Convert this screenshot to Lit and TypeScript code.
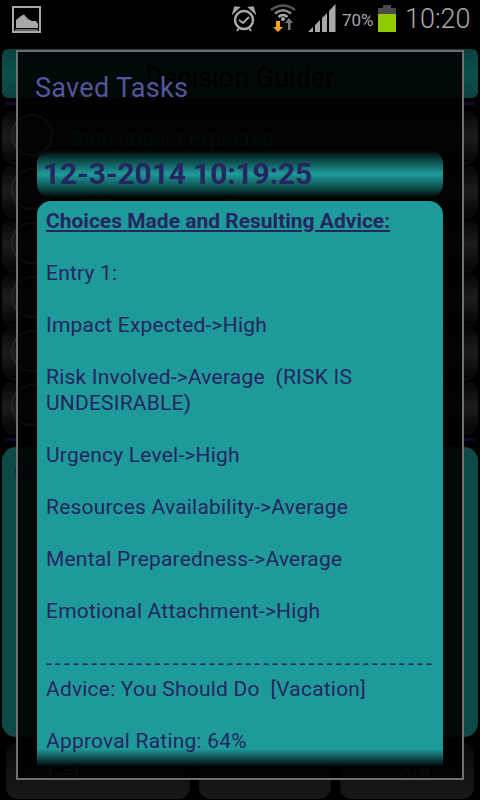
import { LitElement, html, css } from "lit";
import { customElement } from "lit/decorators.js";

const rows = ["Rate impact expected", "Rate risk involved", "Rate urgency level", "Rate resources", "Rate preparedness", "Rate attachment"];
const before = [
  "Entry 1:", "", "Impact Expected->High", "", "Risk Involved->Average  (RISK IS UNDESIRABLE)", "",
  "Urgency Level->High", "", "Resources Availability->Average", "", "Mental Preparedness->Average", "",
  "Emotional Attachment->High", "",
];
const after = ["Advice: You Should Do  [Vacation]", "", "Approval Rating: 64%", "", "Entry 2:"];

@customElement("app-root")
export class AppRoot extends LitElement {
  static styles = css`
    :host { display: block; position: relative; width: 480px; height: 800px; overflow: hidden; background: #000; font-family: Roboto, "Liberation Sans", sans-serif; }
    .status { height: 40px; display: flex; align-items: flex-start; color: #a8a8a8; position: relative; }
    .status svg { display: block; flex: none; }
    .pic { margin: 6px 0 0 12px; }
    .alarm { margin: 6px 0 0 191px; }
    .wifi { margin: 4px 0 0 14px; }
    .signal { margin: 4px 0 0 12px; }
    .pct { font-size: 17px; line-height: 20px; margin: 10px 0 0 6px; width: 33px; white-space: nowrap; }
    .batt { margin: 5px 0 0 3px; }
    .time { font-size: 27px; font-weight: 300; line-height: 36px; margin: 1px 0 0 9px; white-space: nowrap; }

    .app { display: flex; flex-direction: column; height: 760px; padding: 9px 2px 0; box-sizing: border-box; }
    .title { height: 49px; flex: none; border-radius: 6px; display: flex; align-items: center; justify-content: center; padding-top: 8px; box-sizing: border-box; font-size: 27px; color: #000;
      background: linear-gradient(180deg, #0a423f 0%, #0b4f4b 50%, #0a423f 100%); }
    .rule { height: 3px; background: #0c0c28; margin: 4px 3px 0; flex: none; }
    .rowlist { display: flex; flex-direction: column; margin-top: 5px; }
    .row { height: 54px; box-sizing: border-box; display: flex; align-items: flex-start; gap: 18px; color: #104c4c; font-size: 21px; line-height: 26px; border-bottom: 1px solid #111;
      background: linear-gradient(180deg, #040404, #1c1c1c 50%, #040404); border-radius: 12px; padding: 4px 0 0 9px; }
    .row span:last-child { margin-top: 12px; }
    .knob { width: 42px; height: 42px; border: 2px solid; border-color: #5a5a5a #5a5a5a #5a5a5a #242424; border-radius: 50%; flex: none; box-sizing: border-box; }
    .panel { flex: none; margin-top: 6px; height: 290px; border-radius: 14px; background: #0b4a46; color: #12204a; padding: 12px 12px; box-sizing: border-box; font-size: 21px; }
    .btns { display: flex; gap: 9px; margin: 6px 4px 0; flex: none; }
    .btn { height: 56px; border-radius: 12px; background: linear-gradient(180deg, #090909, #181818); color: #484848; font-size: 21px; box-sizing: border-box; padding: 18px 44px 0 42px; overflow: hidden; }
    .b1 { width: 184px; } .b2 { width: 132px; } .b3 { flex: 1; text-align: right; }

    .dialog { position: absolute; left: 16px; top: 50px; width: 448px; height: 730px; box-sizing: border-box; border: 2px solid #6f6f6f; background: rgba(0, 0, 0, 0.88);
      display: flex; flex-direction: column; padding: 0 19px; }
    .dtitle { font-size: 27px; line-height: 32px; color: #55559a; margin: 20px 0 0 -2px; flex: none; letter-spacing: 0.3px; }
    .stamp { height: 48px; margin-top: 46px; flex: none; border-radius: 14px; font-size: 30px; font-weight: 700; color: #252560; display: flex; align-items: center; padding: 0 0 1px 6px; box-sizing: border-box; letter-spacing: -0.15px;
      background: linear-gradient(180deg, #000 0%, #0c4a48 22%, #1e9a9a 50%, #0c4a48 80%, #000 100%); flex-shrink: 0; }
    .card { position: relative; flex: 1; margin: 3px 0 11px; background: #1f9a9a; border-radius: 14px 14px 0 0; overflow: hidden; padding: 7px 9px 0; color: #252560; font-size: 21px; line-height: 26px; letter-spacing: 0.2px; }
    .card h2 { margin: 0; font: inherit; font-weight: 700; text-decoration: underline; letter-spacing: 0; }
    .card p { margin: 0; min-height: 26px; white-space: pre-wrap; }
    .card p.dash { letter-spacing: 3.25px; white-space: nowrap; }
    .fade { position: absolute; left: 0; right: 0; bottom: 0; height: 18px; background: linear-gradient(180deg, rgba(0,0,0,0), #000); }
  `;

  render() {
    return html`
      <div class="status">
        <svg class="pic" width="29" height="27" viewBox="0 0 29 27"><rect x="1" y="1" width="27" height="25" fill="none" stroke="#a8a8a8" stroke-width="2"/><path d="M4 22V14L9 10L12 8.500L16 13L20 15L24 15L26 18V22Z" fill="#a8a8a8"/><path d="M3 24H26" stroke="#666" stroke-width="2"/></svg>
        <svg class="alarm" width="24" height="26" viewBox="0 0 24 26"><circle cx="12" cy="14" r="9" fill="none" stroke="#a8a8a8" stroke-width="2.500"/><path d="M7 14L11 17L17 11" fill="none" stroke="#a8a8a8" stroke-width="2"/><path d="M1 7L7 1.500L3 1Z M23 7L17 1.500L21 1Z" fill="#a8a8a8" stroke="#a8a8a8" stroke-width="1.500"/><path d="M5 25L7 22M19 25L17 22" stroke="#a8a8a8" stroke-width="2"/></svg>
        <svg class="wifi" width="26" height="29" viewBox="0 0 26 29"><path d="M1 6Q13 -3 25 6" fill="none" stroke="#555" stroke-width="2.500"/><path d="M5 9.500Q13 3 21 9.500" fill="none" stroke="#8a8a8a" stroke-width="2.500"/><path d="M8.500 13Q13 9 17.500 13" fill="none" stroke="#a8a8a8" stroke-width="2.500"/><circle cx="13" cy="15" r="2" fill="#a8a8a8"/><path d="M10 17V23H13L8 28L3 23H6V17Z" fill="#f5a623"/><path d="M18 26V19H15L19 14L23 19H20.500V26Z" fill="#777"/></svg>
        <svg class="signal" width="28" height="28" viewBox="0 0 28 28"><path d="M0 28L5 23V28ZM7 28V21L12 16V28ZM14 28V14L19 9V28ZM21 28V7L27.500 0V28Z" fill="#a8a8a8"/></svg>
        <span class="pct">70%</span>
        <svg class="batt" width="18" height="27" viewBox="0 0 18 27"><path d="M5 0H13V3H18V9H0V3H5Z" fill="#4a4a4a"/><rect y="9" width="18" height="18" fill="#8fcb00"/></svg>
        <span class="time">10:20</span>
      </div>
      <div class="app">
        <div class="title">Decision Guider</div>
        <div class="rule"></div>
        <div class="rowlist">
          ${rows.map((r) => html`<div class="row"><span class="knob"></span><span>${r}</span></div>`)}
        </div>
        <div class="rule"></div>
        <div class="panel">Choices</div>
        <div class="btns"><div class="btn b1">Get</div><div class="btn b2"></div><div class="btn b3">ore</div></div>
      </div>
      <div class="dialog">
        <div class="dtitle">Saved Tasks</div>
        <div class="stamp">12-3-2014 10:19:25</div>
        <div class="card">
          <h2>Choices Made and Resulting Advice:</h2>
          <p></p>
          ${before.map((l) => html`<p>${l}</p>`)}
          <p class="dash">-------------------------------------------</p>
          ${after.map((l) => html`<p>${l}</p>`)}
          <div class="fade"></div>
        </div>
      </div>
    `;
  }
}
